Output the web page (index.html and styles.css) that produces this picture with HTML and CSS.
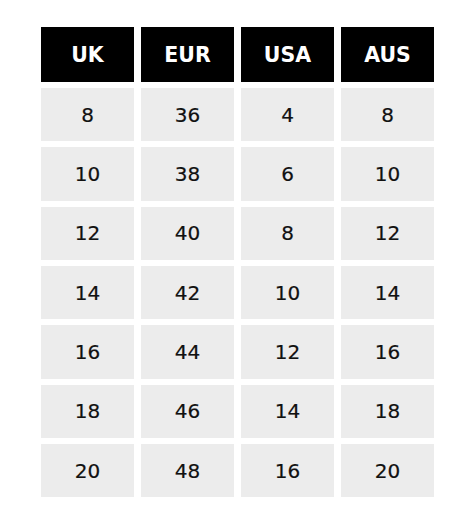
FILE: index.html
```html
<!DOCTYPE html>
<html>
<head>
<meta charset="utf-8">
<link rel="stylesheet" href="styles.css">
</head>
<body>
<div class="chart">
  <div class="head">UK</div><div class="head">EUR</div><div class="head">USA</div><div class="head">AUS</div>
  <div class="cell">8</div><div class="cell">36</div><div class="cell">4</div><div class="cell">8</div>
  <div class="cell">10</div><div class="cell">38</div><div class="cell">6</div><div class="cell">10</div>
  <div class="cell">12</div><div class="cell">40</div><div class="cell">8</div><div class="cell">12</div>
  <div class="cell">14</div><div class="cell">42</div><div class="cell">10</div><div class="cell">14</div>
  <div class="cell">16</div><div class="cell">44</div><div class="cell">12</div><div class="cell">16</div>
  <div class="cell">18</div><div class="cell">46</div><div class="cell">14</div><div class="cell">18</div>
  <div class="cell">20</div><div class="cell">48</div><div class="cell">16</div><div class="cell">20</div>
</div>
</body>
</html>
```

FILE: styles.css
```css
html, body {
  margin: 0;
  padding: 0;
  background: #ffffff;
}
body {
  padding: 27px 0 0 41px;
  font-family: "DejaVu Sans", sans-serif;
}
.chart {
  display: grid;
  grid-template-columns: repeat(4, 93px);
  grid-template-rows: 55px repeat(7, 53.33px);
  column-gap: 7px;
  row-gap: 6px;
}
.head {
  background: #000000;
  color: #ffffff;
  font-family: "DejaVu Sans", sans-serif;
  font-weight: 700;
  font-size: 20.5px;
  display: flex;
  align-items: center;
  justify-content: center;
}
.cell {
  background: #ececec;
  color: #111111;
  font-family: "DejaVu Sans", sans-serif;
  font-weight: 400;
  font-size: 20px;
  -webkit-text-stroke: 0.2px #111111;
  display: flex;
  align-items: center;
  justify-content: center;
}
```
